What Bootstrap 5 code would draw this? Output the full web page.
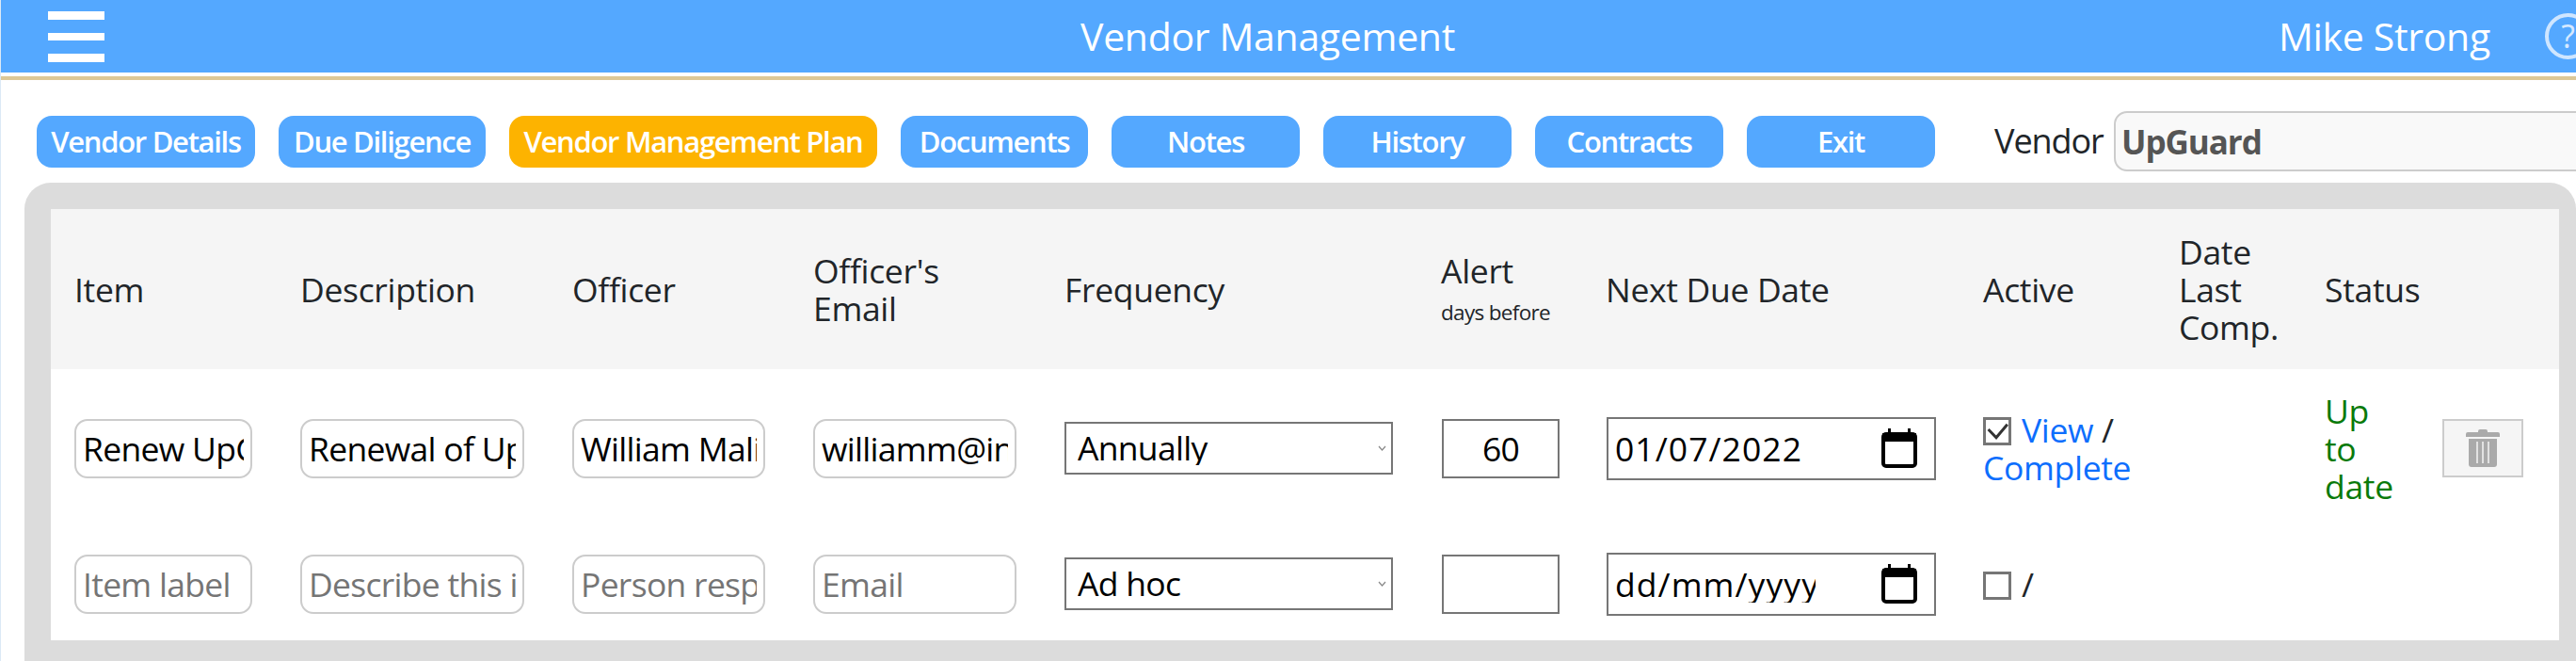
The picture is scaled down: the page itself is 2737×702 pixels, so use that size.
<!doctype html>
<html lang="en">
<head>
<meta charset="utf-8">
<title>Vendor Management</title>
<link href="https://cdn.jsdelivr.net/npm/bootstrap@5.3.0/dist/css/bootstrap.min.css" rel="stylesheet">
<style>
html,body{height:702px;overflow:hidden;background:#fff}
body{font-family:"Open Sans","Noto Sans",sans-serif;color:#212529;border-left:1px solid #dbe9f6;letter-spacing:-.02em;width:2737px}
.topbar{height:77px;background:#54a8ff;color:#fff;overflow:hidden;font-size:41px;line-height:1}
.burger{width:1000px;padding-left:50px}
.burger svg{display:block;filter:blur(.7px)}
.apptitle{width:692px;text-align:center}
.userbox{width:316px;margin-left:auto}
.username{width:283px;flex:none}
.helpdot{flex:none;width:49px;height:49px;border:4px solid #cfe6ff;border-radius:50%;color:#d6e9ff;font-size:34px;text-align:center;line-height:41px}
.tanline{height:4px;margin-top:4px;background:#dcc897}
.toolbar{padding:33px 0 12px 38px;gap:25px;width:2736px;overflow:hidden}
.navbtn{flex:none;width:200px;height:55px;padding:0;border:0;border-radius:16px;background:#54a8ff;color:#fff;font-size:31px;font-weight:600;line-height:55px;letter-spacing:-.042em}
.navbtn:hover,.navbtn:focus{background:#54a8ff;color:#fff}
.navbtn.w-details{width:232px}
.navbtn.w-due{width:220px}
.navbtn.w-plan{width:391px;background:#fdb300}
.navbtn.w-docs{width:199px}
.vendorlabel{flex:none;margin-left:38px;font-size:36px;width:125px;line-height:1;letter-spacing:-.03em}
.vendorbox{flex:none;width:700px;height:64px;margin-left:-23px;padding:0 6px;background:#f9f9f9;border:2px solid #ccc;border-radius:14px;font-size:35px;font-weight:700;color:#555;letter-spacing:-.03em}
.panelbox{margin-left:25px;width:2711px;height:508px;padding:28px 17px 0 28px;background:#dcdcdc;border-radius:28px 28px 0 0}
.vendortable{table-layout:fixed;width:2665px;margin:0;font-size:35.5px;line-height:40px;--bs-table-bg:transparent;--bs-table-color:#212529}
.vendortable th{height:170px;padding:0 26px 0 25px;background:#f5f5f5;font-weight:400;vertical-align:middle;color:#212529}
.vendortable td{padding:24px 26px 24px 25px;background:#fff;vertical-align:middle}
.vendortable tbody tr:last-child td{height:120px;padding-top:0;padding-bottom:0}
.tinynote{display:block;font-size:22.5px;line-height:30px;margin-top:10px;letter-spacing:-.03em}
.roundfield{width:100%;height:63px;padding:0 7px;border:2px solid #ccc;border-radius:14px;font-size:35.5px;color:#000;background:#fff;letter-spacing:-.02em;line-height:1;font-family:inherit;box-shadow:none}
.roundfield::placeholder,.roundfield.ghost::placeholder{color:#757575;opacity:1}
.pickfield{width:349px;height:56px;padding:0 12px;border:2px solid #767676;border-radius:0;font-size:35.5px;color:#000;letter-spacing:-.02em;line-height:1;background-size:9px 6px;background-position:right 5px center;background-image:url("data:image/svg+xml,%3Csvg xmlns='http://www.w3.org/2000/svg' viewBox='0 0 9 6'%3E%3Cpath d='M1 1l3.500 4L8 1' fill='none' stroke='%23888' stroke-width='1.200'/%3E%3C/svg%3E")}
.numfield{display:block;width:125px;height:63px;margin-left:1px;padding:0;border:2px solid #767676;border-radius:0;font-size:35.5px;text-align:center;letter-spacing:-.02em;color:#000;background:#fff}
.datebox{width:350px;height:67px;margin-left:1px;border:2px solid #767676;background:#fff;padding:0 18px 0 7px}
.datefield{width:213px;border:0;padding:0;margin:0;font-size:35.5px;color:#000;letter-spacing:.03em;background:transparent;outline:0}
.datefield::placeholder{color:#000;opacity:1}
.activecell{padding-left:26px !important}
.tickbox.form-check-input{width:30px;height:30px;margin:0 2px 0 0;vertical-align:-3px;border:3px solid #767676;border-radius:0;background-color:#fff;background-size:100% 100%}
.tickbox.form-check-input:checked{background-color:#fff;border-color:#767676;background-image:url("data:image/svg+xml,%3Csvg xmlns='http://www.w3.org/2000/svg' viewBox='0 0 24 24'%3E%3Cpath d='M2.600 10L11 18.700L22.800 4.700' fill='none' stroke='%23333' stroke-width='3'/%3E%3C/svg%3E")}
.tickbox:focus{box-shadow:none}
.bluelink{color:#0d6efd;text-decoration:none}
.okstate{color:#0a7a0a}
.binbtn{width:86px;height:62px;padding:0;background:#f5f5f5;border:2px solid #ccc;border-radius:0;margin-left:1px}
</style>
</head>
<body>
<header class="topbar d-flex align-items-center">
  <div class="burger">
    <svg width="60" height="54" viewBox="0 0 60 54" aria-label="Menu"><rect y="0" width="60" height="9" fill="#fff"/><rect y="23" width="60" height="8" fill="#fff"/><rect y="45" width="60" height="9" fill="#fff"/></svg>
  </div>
  <div class="apptitle">Vendor Management</div>
  <div class="userbox d-flex align-items-center">
    <div class="username">Mike Strong</div>
    <div class="helpdot">?</div>
  </div>
</header>
<div class="tanline"></div>

<div class="toolbar d-flex align-items-center">
  <a class="btn navbtn w-details" href="#">Vendor Details</a>
  <a class="btn navbtn w-due" href="#">Due Diligence</a>
  <a class="btn navbtn w-plan" href="#">Vendor Management Plan</a>
  <a class="btn navbtn w-docs" href="#">Documents</a>
  <a class="btn navbtn" href="#">Notes</a>
  <a class="btn navbtn" href="#">History</a>
  <a class="btn navbtn" href="#">Contracts</a>
  <a class="btn navbtn" href="#">Exit</a>
  <label class="vendorlabel">Vendor</label>
  <input class="form-control vendorbox" type="text" value="UpGuard" readonly>
</div>

<div class="panelbox">
  <table class="table table-borderless vendortable">
    <colgroup>
      <col style="width:240px"><col style="width:289px"><col style="width:256px"><col style="width:267px"><col style="width:400px"><col style="width:175px"><col style="width:400px"><col style="width:209px"><col style="width:155px"><col style="width:124px"><col style="width:150px">
    </colgroup>
    <thead>
      <tr>
        <th>Item</th><th>Description</th><th>Officer</th><th>Officer's Email</th><th>Frequency</th>
        <th>Alert<span class="tinynote">days before</span></th>
        <th>Next Due Date</th><th class="activecell">Active</th><th>Date Last Comp.</th><th>Status</th><th></th>
      </tr>
    </thead>
    <tbody>
      <tr>
        <td><input class="roundfield" type="text" value="Renew UpGuard"></td>
        <td><input class="roundfield" type="text" value="Renewal of UpGuard"></td>
        <td><input class="roundfield" type="text" value="William Malik"></td>
        <td><input class="roundfield" type="text" value="williamm@inaudit.com"></td>
        <td><select class="form-select pickfield"><option>Annually</option></select></td>
        <td><input class="numfield" type="text" value="60"></td>
        <td>
          <div class="datebox d-flex align-items-center justify-content-between">
            <input class="datefield" type="text" value="01/07/2022">
            <svg width="38" height="42" viewBox="0 0 38 42"><path d="M7 0h3v5H7zM28 0h3v5h-3z" fill="#000"/><rect x="2" y="6" width="34" height="34" rx="3" fill="#fff" stroke="#000" stroke-width="4"/><rect x="1" y="5" width="36" height="9" fill="#000"/></svg>
          </div>
        </td>
        <td class="activecell"><input class="form-check-input tickbox" type="checkbox" checked> <a class="bluelink" href="#">View</a> / <a class="bluelink" href="#">Complete</a></td>
        <td></td>
        <td class="okstate">Up to date</td>
        <td>
          <button class="btn binbtn d-flex align-items-center justify-content-center" type="button" aria-label="Delete">
            <svg width="36" height="40" viewBox="0 0 36 40"><path d="M13 2q0-2 2-2h6q2 0 2 2v1h11q2 0 2 2v3H0V5q0-2 2-2h11z" fill="#aaa"/><path d="M3 10h30v27q0 3-3 3H6q-3 0-3-3z" fill="#aaa"/><path d="M12 13v23M18 13v23M24 13v23" stroke="#f5f5f5" stroke-width="1.500"/></svg>
          </button>
        </td>
      </tr>
      <tr>
        <td><input class="roundfield ghost" type="text" placeholder="Item label"></td>
        <td><input class="roundfield ghost" type="text" placeholder="Describe this item"></td>
        <td><input class="roundfield ghost" type="text" placeholder="Person responsible"></td>
        <td><input class="roundfield ghost" type="text" placeholder="Email"></td>
        <td><select class="form-select pickfield"><option>Ad hoc</option></select></td>
        <td><input class="numfield" type="text"></td>
        <td>
          <div class="datebox d-flex align-items-center justify-content-between">
            <input class="datefield" type="text" placeholder="dd/mm/yyyy">
            <svg width="38" height="42" viewBox="0 0 38 42"><path d="M7 0h3v5H7zM28 0h3v5h-3z" fill="#000"/><rect x="2" y="6" width="34" height="34" rx="3" fill="#fff" stroke="#000" stroke-width="4"/><rect x="1" y="5" width="36" height="9" fill="#000"/></svg>
          </div>
        </td>
        <td class="activecell"><input class="form-check-input tickbox" type="checkbox"> /</td>
        <td></td><td></td><td></td>
      </tr>
    </tbody>
  </table>
</div>
<script src="https://cdn.jsdelivr.net/npm/bootstrap@5.3.0/dist/js/bootstrap.bundle.min.js"></script>
</body>
</html>
